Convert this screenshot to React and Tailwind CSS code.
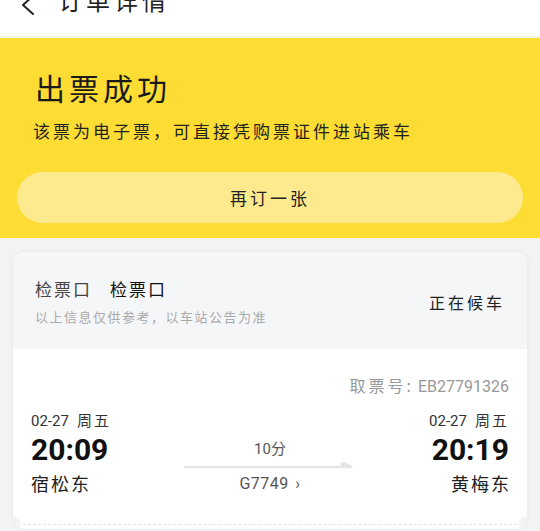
const cjk = { fontFamily: '"Noto Sans CJK SC", "Noto Sans", sans-serif' };
const num = { fontFamily: 'Roboto, "Noto Sans CJK SC", sans-serif' };

export default function App() {
  return (
    <div className="w-[540px] h-[531px] overflow-hidden bg-[#f3f3f3]" style={cjk}>
      <div className="h-[36px] bg-white overflow-hidden flex items-start">
        <svg className="ml-[20px] -mt-[6px]" width="16" height="22" viewBox="0 0 16 22" fill="none">
          <path d="M13 2 L3 11 L13 20" stroke="#222" strokeWidth="2" strokeLinecap="round" strokeLinejoin="round" />
        </svg>
        <div className="ml-[22px] -mt-[12px] text-[24px] leading-[24px] tracking-[4px] text-[#222]">订单详情</div>
      </div>
      <div className="h-[2px] bg-[#f6f4e6]" />
      <div className="bg-[#fddc33] px-[17px] pt-[29px] pb-[15px]">
        <div className="pl-[18px] text-[30px] leading-[40px] tracking-[4px] text-[#1a1a1a]">出票成功</div>
        <div className="pl-[16px] mt-[12px] text-[17px] leading-[24px] tracking-[3px] text-[#222]">该票为电子票，可直接凭购票证件进站乘车</div>
        <div className="mt-[29px] h-[51px] rounded-full bg-[#feea8e] flex items-center justify-center text-[17px] tracking-[3px] text-[#222]">再订一张</div>
      </div>
      <div className="px-[13px] pt-[14px]">
        <div className="rounded-[12px] bg-white overflow-hidden shadow-[0_0_6px_rgba(0,0,0,0.05)]">
          <div className="bg-[#f5f6f8] h-[97px] px-[22px] flex items-center justify-between">
            <div>
              <div className="text-[17px] leading-[24px] tracking-[2px] text-[#444]">
                检票口<span className="ml-[18px] text-[#111]">检票口</span>
              </div>
              <div className="mt-[8px] text-[13px] leading-[16px] tracking-[1.5px] text-[#aaa]">以上信息仅供参考，以车站公告为准</div>
            </div>
            <div className="text-[16px] tracking-[3px] text-[#222] mt-[2px]">正在候车</div>
          </div>
          <div className="relative px-[18px] pt-[25px] h-[180px]">
            <div className="text-right text-[16px] leading-[22px] text-[#999]" style={num}>
              <span className="tracking-[3px]" style={cjk}>取票号:</span> EB27791326
            </div>
            <div className="mt-[12px] flex items-start justify-between">
              <div>
                <div className="text-[15px] leading-[20px] text-[#333]" style={num}>02-27<span className="ml-[8px] tracking-[2px]" style={cjk}>周五</span></div>
                <div className="mt-[1px] text-[30px] leading-[36px] font-bold text-[#111]" style={num}>20:09</div>
                <div className="mt-[3px] text-[18px] leading-[24px] tracking-[2px] text-[#222]">宿松东</div>
              </div>
              <div className="pt-[29px] flex flex-col items-center w-[176px]">
                <div className="text-[15px] leading-[20px] text-[#555]" style={num}>10分</div>
                <svg className="mt-[3px]" width="172" height="8" viewBox="0 0 172 8">
                  <path d="M0 5 H168 L158 0.5 V5" fill="#e6e6e6" stroke="#e6e6e6" strokeWidth="2.5" />
                </svg>
                <div className="mt-[4px] text-[16px] leading-[20px] tracking-[0.5px] text-[#555]" style={num}>G7749 <span className="ml-[2px]">›</span></div>
              </div>
              <div className="text-right">
                <div className="text-[15px] leading-[20px] text-[#333]" style={num}>02-27<span className="ml-[8px] tracking-[2px]" style={cjk}>周五</span></div>
                <div className="mt-[1px] text-[30px] leading-[36px] font-bold text-[#111]" style={num}>20:19</div>
                <div className="mt-[3px] text-[18px] leading-[24px] tracking-[2px] text-[#222] -mr-[2px]">黄梅东</div>
              </div>
            </div>
            <div className="absolute left-[10px] right-[10px] top-[175px] border-t border-dashed border-[#e4e4e4]" />
            <div className="absolute -left-[8px] top-[167px] w-[16px] h-[16px] rounded-full bg-[#f3f3f3]" />
            <div className="absolute -right-[8px] top-[167px] w-[16px] h-[16px] rounded-full bg-[#f3f3f3]" />
          </div>
        </div>
      </div>
    </div>
  );
}
